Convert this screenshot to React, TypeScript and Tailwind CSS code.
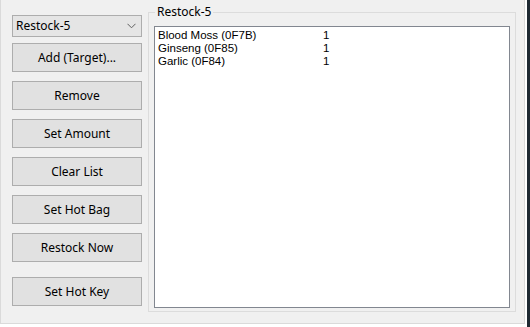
import React from "react"

const items = [
  { name: "Blood Moss (0F7B)", amount: 1 },
  { name: "Ginseng (0F85)", amount: 1 },
  { name: "Garlic (0F84)", amount: 1 },
]

const topButtons = ["Add (Target)...", "Remove", "Set Amount", "Clear List", "Set Hot Bag", "Restock Now"]

function WinButton({ label }: { label: string }) {
  return (
    <button
      type="button"
      className="h-[29px] w-full border border-[#adadad] bg-[#e1e1e1] text-[12px] text-black"
    >
      {label}
    </button>
  )
}

export default function App() {
  return (
    <div
      className="flex h-[327px] w-[530px] bg-white text-black"
      style={{ fontFamily: '"Noto Sans", "Liberation Sans", sans-serif' }}
    >
      <div className="flex h-[324px] w-[525px] border-x border-b border-[#dadada] bg-[#f0f0f0]">
        {/* left column: profile select + actions */}
        <div className="flex w-[130px] flex-col pl-[11px] pt-[15px] box-content">
          <div className="flex h-[22px] items-center justify-between border border-[#adadad] bg-[#e5e5e5] pl-[3px] pr-[5px] text-[12px]">
            <span>Restock-5</span>
            <svg width="9" height="6" viewBox="0 0 9 6" className="text-[#606060]">
              <path d="M0.5 0.8 L4.5 4.8 L8.5 0.8" fill="none" stroke="currentColor" strokeWidth="1" />
            </svg>
          </div>
          <div className="mt-[6px] flex flex-col gap-[9px]">
            {topButtons.map((b) => (
              <WinButton key={b} label={b} />
            ))}
          </div>
          <div className="mt-[15px]">
            <WinButton label="Set Hot Key" />
          </div>
        </div>

        {/* group box with the restock list */}
        <fieldset className="ml-[6px] mt-[5px] h-[307px] w-[368px] border border-[#dcdcdc] px-[5px] pb-[4px]">
          <legend className="ml-[1px] px-[2px] text-[12px] leading-[14px]">Restock-5</legend>
          <div
            className="mt-[7px] h-[282px] border border-[#828790] bg-white pl-[3px] pt-[2px] text-[11.5px]"
            style={{ fontFamily: '"Liberation Sans", sans-serif' }}
          >
            {items.map((it) => (
              <div key={it.name} className="flex h-[13px] items-center leading-[13px]">
                <span className="w-[165px]">{it.name}</span>
                <span>{it.amount}</span>
              </div>
            ))}
          </div>
        </fieldset>
      </div>
      <div className="h-[327px] w-[2px] bg-white" />
      <div className="h-[327px] flex-1 bg-[#1f2a33]" />
    </div>
  )
}
